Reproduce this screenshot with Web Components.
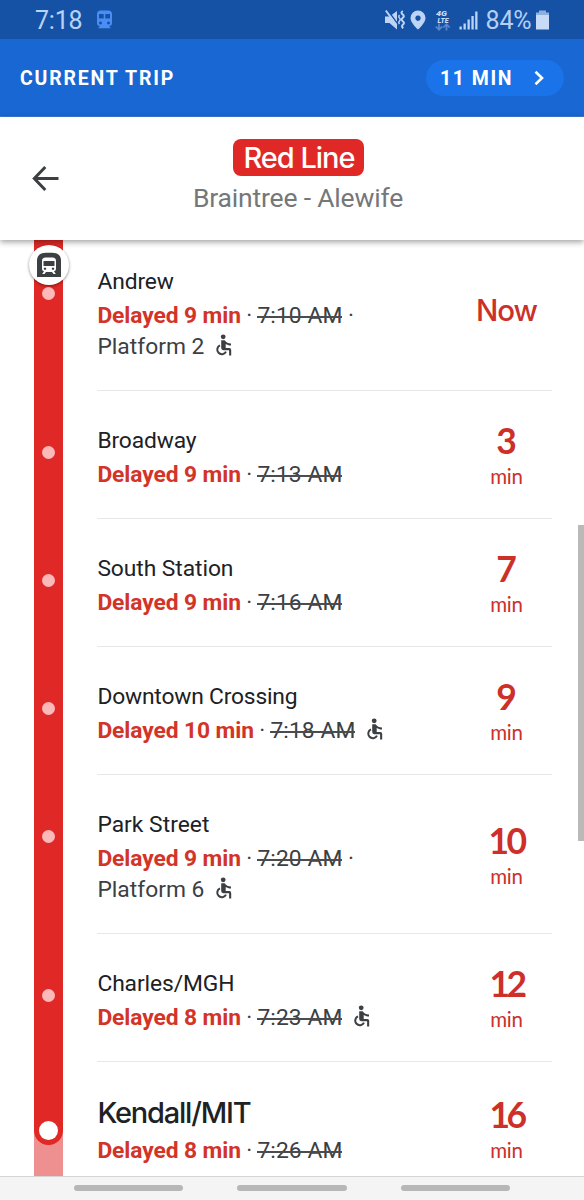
<!DOCTYPE html>
<html lang="en"><head><meta charset="utf-8"><title>Current trip</title>
<style>html,body{margin:0;height:100%;overflow:hidden;background:#fff}body{font-family:Roboto,sans-serif}</style></head>
<body>
<trip-app></trip-app>
<script>
class Base extends HTMLElement{
  constructor(){super();this.attachShadow({mode:'open'});}
  connectedCallback(){this.shadowRoot.innerHTML=`<style>*{box-sizing:border-box}${this.css()}</style>${this.html()}`;this.ready&&this.ready();}
  a(n,d=''){return this.getAttribute(n)??d;}
}
/* Text whose tracking is adjusted so that it fills a given width. */
class FitText extends Base{
  css(){return `:host{display:inline-block;white-space:nowrap}span{display:inline-block;white-space:pre}`}
  html(){return `<span><slot></slot></span>`}
  ready(){
    const s=this.shadowRoot.querySelector('span'),w=+this.a('width');
    const n=this.textContent.length;
    if(w&&n>1){const d=(w-s.getBoundingClientRect().width)/n;s.style.letterSpacing=d+'px';}
  }
}
class StatusBar extends Base{
  css(){return `:host{display:flex;align-items:center;height:39px;background:#1552a6;color:#b9d3f7;font-size:25px;padding:0 33px 0 35px}
  fit-text{position:relative;top:1px}
  svg{display:block;flex:none}.sp{flex:1}`}
  html(){return `<fit-text width="47.500">7:18</fit-text>
  <svg style="margin-left:13px" width="17" height="20" viewBox="0 0 17 20"><path fill="#4c8df5" fill-rule="evenodd" d="M4 0.5h9q3 .5 3 3.5v9q0 3-3 3l1.500 1.500v.8H2.500v-.8L4 16q-3 0-3-3V4Q1 1 4 .5ZM3 4v4.500h4.700V4Zm6.300 0v4.500H14V4ZM4.500 11.500a1.500 1.500 0 1 0 .01 0Zm8 0a1.500 1.500 0 1 0 .01 0Z"/></svg>
  <div class="sp"></div>
  <svg width="20" height="22" viewBox="0 0 20 22"><path fill="#bed4f4" d="M0 7.500h4.500L12 2v18.500L4.500 14H0Z"/><path stroke="#1552a6" stroke-width="1.500" d="M2.500 1 13 15.500"/><path stroke="#bed4f4" stroke-width="2" d="M.8 1.500 11.500 16"/><path fill="none" stroke="#bed4f4" stroke-width="2" d="M17.800 2q-2.600 1.700-.2 3.400t.2 3.400t0 3.400t.2 3.400t.2 3.600"/><path fill="none" stroke="#bed4f4" stroke-width="1.400" d="M14.500 6q-1.500 1.500 0 3t0 3t0 3"/></svg>
  <svg style="margin-left:5px" width="16" height="20" viewBox="0 0 16 20"><path fill="#bed4f4" fill-rule="evenodd" d="M8 .5a7.500 7.500 0 0 1 7.500 7.500C15.500 13 8 19.500 8 19.500S.5 13 .5 8A7.500 7.500 0 0 1 8 .5Zm0 5a2.700 2.700 0 1 0 .01 0Z"/></svg>
  <svg style="margin-left:9px" width="16" height="22" viewBox="0 0 16 22"><g fill="#c6daf6" font-family="Roboto,sans-serif" font-weight="900" font-style="italic"><text x="1" y="6.800" font-size="8" textLength="11" lengthAdjust="spacingAndGlyphs">4G</text><text x="2.500" y="13.800" font-size="6.800" textLength="11" lengthAdjust="spacingAndGlyphs">LTE</text></g><g fill="none" stroke="#5b88cc" stroke-width="1.700"><path d="M4 14.500v6M.8 17.500 4 20.700l3.200-3.200M11.500 21.500v-6M8.300 18.500l3.200-3.200 3.200 3.200"/></g></svg>
  <svg style="margin-left:8px" width="19" height="20" viewBox="0 0 19 20"><g fill="#bed4f4"><path d="M.5 16.500h2.300v3H.5ZM4.500 13.500h2.300v6H4.500ZM8.500 9.500h2.300v10H8.500ZM12.400 6h2.300v13.500h-2.300ZM16.200 1.500h2.300v18h-2.300Z"/></g></svg>
  <fit-text width="46" style="margin-left:7.500px;color:#b5cff5">84%</fit-text>
  <svg style="margin:0 1px 0 3.500px" width="15" height="20" viewBox="0 0 15 20"><path fill="#8eb0df" d="M4 .5h7v2h3V6H1V2.500h3Z"/><path fill="#c7daf7" d="M1 5h13v14.500H1Z"/></svg>`}
}
class TripBanner extends Base{
  css(){return `:host{display:flex;align-items:center;justify-content:space-between;height:78px;background:#1967d2;border-bottom:1px solid #3c7cd6;padding:1px 20px 0 20px;color:#fff;font-weight:700;font-size:19.500px}
  fit-text{position:relative;top:.5px}
  .pill{display:flex;align-items:center;justify-content:space-between;width:138px;height:36px;border-radius:18px;background:#1a73e8;padding:0 19px 0 14px}`}
  html(){return `<fit-text width="155">CURRENT TRIP</fit-text><div class="pill"><fit-text width="73">11 MIN</fit-text><svg width="12" height="16" viewBox="0 0 12 16"><path d="M2.500 1.800 9 8 2.500 14.200" fill="none" stroke="#fff" stroke-width="2.600"/></svg></div>`}
}
class LineHeader extends Base{
  css(){return `:host{display:grid;grid-template-columns:60px 1fr 46px;height:123px;position:relative;z-index:3;background:#fff;box-shadow:0 2px 6px rgba(0,0,0,.38)}
  svg{margin:47px 0 0 31px}.c{display:flex;flex-direction:column;align-items:center;padding-top:22px;padding-left:10px;margin-left:-12px}
  .tag{height:37px;width:131px;border-radius:8px;background:#e02826;color:#fff;display:flex;justify-content:center;font:500 29px/38px Inter,sans-serif;padding-left:2px}
  .sub{font-size:26.500px;line-height:30px;color:#757779;margin-top:7px}`}
  html(){return `<svg width="29" height="29" viewBox="0 0 29 29"><path d="M27.500 14.500H4M14.300 3 3.300 14.500l11 11.500" fill="none" stroke="#3c4043" stroke-width="3"/></svg>
  <div class="c"><div class="tag"><fit-text width="111">Red Line</fit-text></div><div class="sub"><fit-text width="210">Braintree - Alewife</fit-text></div></div>`}
}
class WheelChair extends Base{
  css(){return `:host{display:inline-block;width:18px;height:22px;margin-left:10.500px;vertical-align:-2px}svg{display:block}`}
  html(){return `<svg width="18" height="22" viewBox="0 0 18 22"><circle cx="8.200" cy="2.800" r="2.400" fill="#3c4043"/><path fill="#3c4043" d="M6.200 6.200h3.500c1.600 2.200 3.400 3.200 6.300 3.300v2.100c-2.200 0-3.900-.6-5.300-1.500v3.900h3.600q1.900.1 1.900 2v5.500h-2.100V16.300H8.200q-2-.2-2-2.200Z"/><path d="M5 11.400a4.600 4.600 0 1 0 6 6.200" fill="none" stroke="#3c4043" stroke-width="2"/></svg>`}
}
/* One stop: its part of the rail, its name and status, and its arrival time. */
class StopRow extends Base{
  css(){return `:host{display:grid;grid-template-columns:34px 29px 34.400px 1fr 32px;height:128px;font-size:22.800px;color:#3c4043}
  :host([platform]){height:159px}:host([last]){height:134px}
  .rail{grid-column:2;background:#e02826;display:flex;justify-content:center;align-items:flex-start}
  .dot{margin-top:56px;width:13px;height:13px;border-radius:50%;background:#fbb9b9}
  :host([last]) .rail{background:#ef9090}
  .end{height:84px;width:29px;border-radius:0 0 14.500px 14.500px;background:#e02826;display:flex;justify-content:center;align-items:flex-end;padding-bottom:5px}
  .end i{width:19.500px;height:19.500px;border-radius:50%;background:#fff}
  .body{grid-column:4;display:flex;justify-content:space-between;box-shadow:0 1px #e6e7e8;}
  .txt{padding-top:35px;white-space:nowrap}
  .name{line-height:32px;height:32px;color:#202124}.st,.pl{line-height:31px;height:31px}.st{margin-top:2px}
  :host([last]) .name{font:500 29px/34px Inter,sans-serif;height:35px}:host([last]) .st{margin-top:4px}
  b{color:#d33427;font-weight:700}.old{position:relative}.old::after{content:"";position:absolute;left:0;right:0;top:14px;height:1.500px;background:#4a4d50}
  .time{width:91px;color:#cc3029;display:flex;flex-direction:column;align-items:center;justify-content:center;padding-top:2px}
  .num{font:700 35.500px/36px Lato,sans-serif}.min{font:400 20.500px/22px Lato,sans-serif;margin-top:6px}
  .now{font:500 29.500px/32px Inter,sans-serif;margin-top:-4px}`}
  html(){
    const t=this.a('time'),p=this.a('platform'),wc=this.hasAttribute('wc')?'<wheel-chair></wheel-chair>':'';
    const nw=this.a('nw'),bw=this.a('delay')==='10'?156.5:143.5;
    return `<div class="rail">${this.hasAttribute('last')?'<div class="end"><i></i></div>':'<div class="dot"></div>'}</div>
    <div class="body"><div class="txt"><div class="name"><fit-text width="${nw}">${this.a('name')}</fit-text></div>
    <div class="st"><b><fit-text width="${bw}">Delayed ${this.a('delay')} min</fit-text></b><fit-text width="16.500"> · </fit-text><span class="old"><fit-text width="85">${this.a('was')}</fit-text></span>${p?'<fit-text> ·</fit-text>':wc}</div>
    ${p?`<div class="pl"><fit-text width="107">Platform ${p}</fit-text>${wc}</div>`:''}</div>
    <div class="time">${t==='Now'?'<div class="now"><fit-text width="61">Now</fit-text></div>':`<div class="num"><fit-text width="${t.length>1?(t==='10'?36:34):20}">${t}</fit-text></div><div class="min"><fit-text width="32.500">min</fit-text></div>`}</div></div>`}
}
class TrainBadge extends Base{
  css(){return `:host{position:absolute;left:28.500px;top:5px;width:40px;height:40px;border-radius:50%;background:#fff;box-shadow:0 1px 3px rgba(0,0,0,.45);z-index:1;display:flex;align-items:center;justify-content:center}`}
  html(){return `<svg width="26" height="26" viewBox="0 0 26 26"><path fill="#3c4043" d="M1 25V8Q1.500 1 10 .8h6Q24.500 1 25 8v17Z"/><path fill="#fff" fill-rule="evenodd" d="M9.500 5.500h7q3.500.3 3.500 3.500v8q0 2-2 2.200l1.800 2.800h-2.300l-1.500-2h-6l-1.500 2H6.200L8 19.200Q6 19 6 17V9q0-3.200 3.500-3.500ZM7.500 9v5h11V9ZM9 15.500a1.200 1.200 0 1 0 .01 0Zm8 0a1.200 1.200 0 1 0 .01 0Z"/></svg>`}
}
class NavBar extends Base{
  css(){return `:host{position:relative;z-index:4;display:flex;height:24px;background:#f4f4f4;border-top:1px solid #d4d4d4;gap:54px;padding:8px 74px 0}i{flex:1;height:6px;border-radius:3px;background:#b7b7b7}`}
  html(){return `<i></i><i></i><i></i>`}
}
class TripApp extends Base{
  css(){return `:host{display:flex;flex-direction:column;width:584px;height:1200px;overflow:hidden;background:#fff}
  main{flex:1;min-height:0;overflow:hidden;position:relative;padding-top:1px}.list{margin-top:-10px}
  .thumb{position:absolute;right:0;top:285px;width:6px;height:316px;background:#b9b9b9}`}
  html(){return `<status-bar></status-bar><trip-banner></trip-banner><line-header></line-header>
  <main><train-badge></train-badge><div class="list">
  <stop-row name="Andrew" nw="76.500" delay="9" was="7:10 AM" platform="2" wc time="Now"></stop-row>
  <stop-row name="Broadway" nw="99" delay="9" was="7:13 AM" time="3"></stop-row>
  <stop-row name="South Station" nw="136" delay="9" was="7:16 AM" time="7"></stop-row>
  <stop-row name="Downtown Crossing" nw="200" delay="10" was="7:18 AM" wc time="9"></stop-row>
  <stop-row name="Park Street" nw="112" delay="9" was="7:20 AM" platform="6" wc time="10"></stop-row>
  <stop-row name="Charles/MGH" nw="137" delay="8" was="7:23 AM" wc time="12"></stop-row>
  <stop-row name="Kendall/MIT" nw="153" delay="8" was="7:26 AM" time="16" last></stop-row>
  </div><div class="thumb"></div></main><nav-bar></nav-bar>`}
}
for(const [n,c] of [['fit-text',FitText],['status-bar',StatusBar],['trip-banner',TripBanner],['line-header',LineHeader],['wheel-chair',WheelChair],['stop-row',StopRow],['train-badge',TrainBadge],['nav-bar',NavBar],['trip-app',TripApp]])customElements.define(n,c);
</script></body></html>
